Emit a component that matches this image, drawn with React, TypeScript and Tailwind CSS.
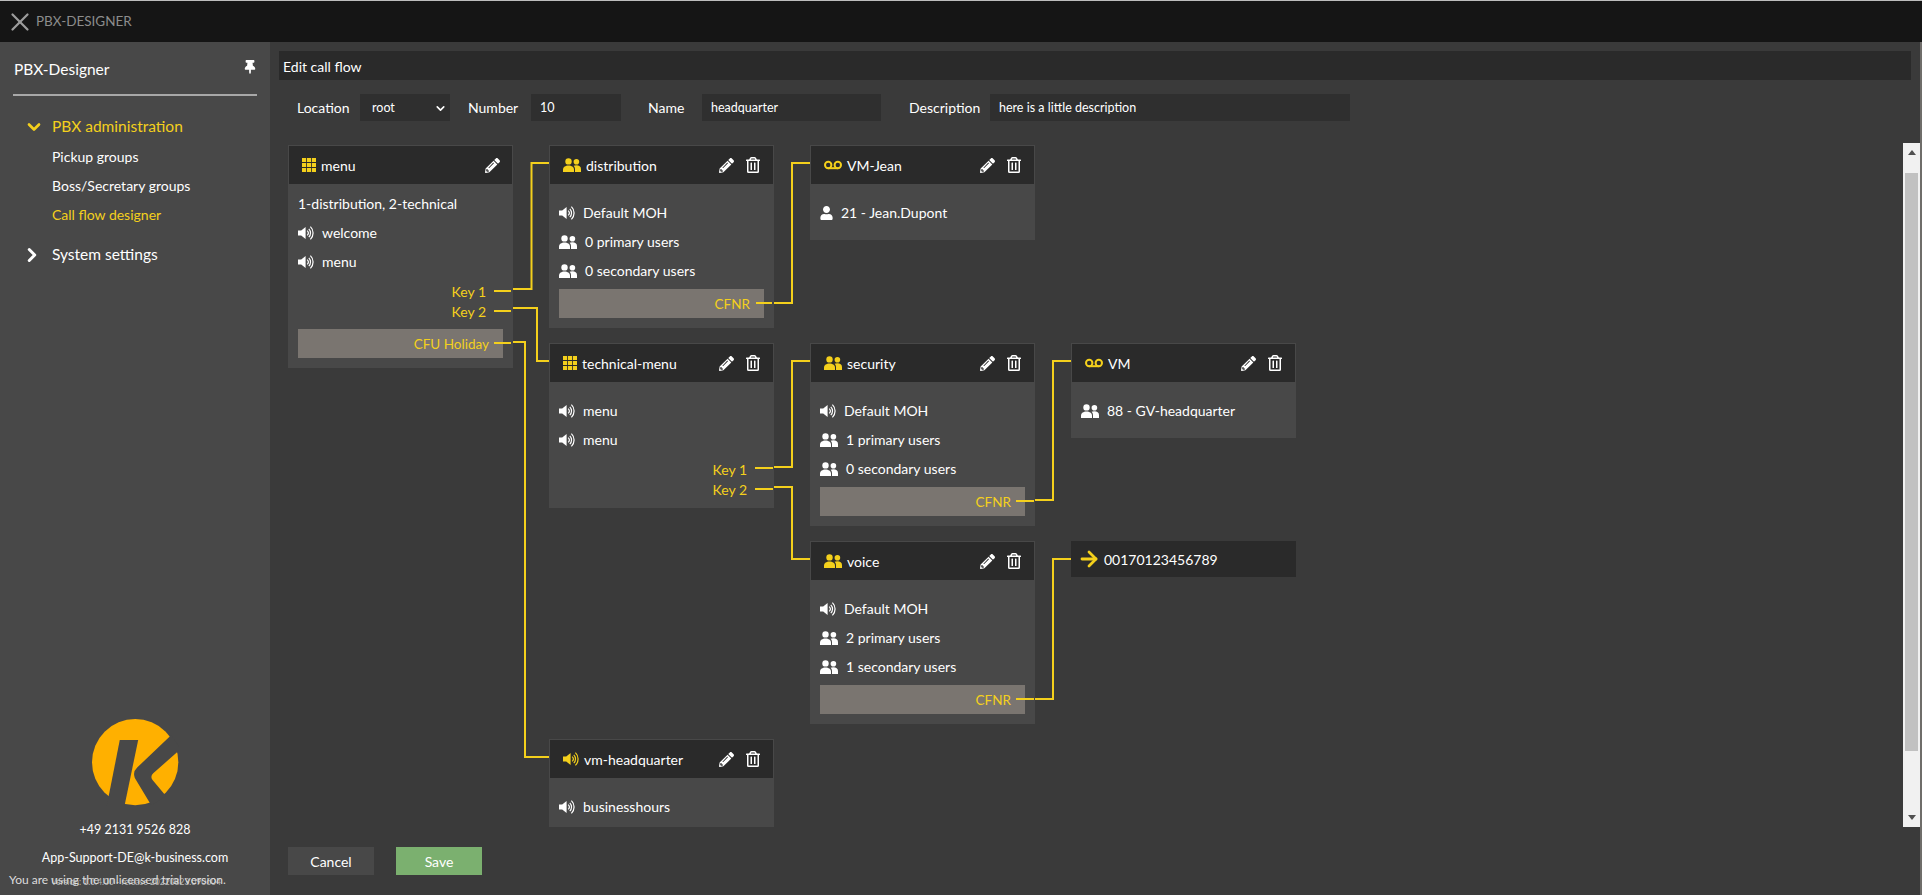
import { ArrowRight, ChevronDown, ChevronRight, X } from "lucide-react";
import { FaPencilAlt, FaRegTrashAlt, FaThumbtack, FaUser } from "react-icons/fa";
import { TfiLayoutGrid3Alt } from "react-icons/tfi";
import type { ReactNode } from "react";

const Speaker = ({ className = "text-white" }: { className?: string }) => (
  <svg viewBox="0 0 16 16" className={`w-4 h-4 shrink-0 ${className}`} fill="none" stroke="currentColor">
    <path d="M0 5.5h3.2L7.6 2v12L3.2 10.5H0z" fill="currentColor" stroke="none" />
    <path d="M9.2 5.6a3.4 3.4 0 0 1 0 4.8" strokeWidth="1.2" />
    <path d="M10.8 3.8a6 6 0 0 1 0 8.4" strokeWidth="1.2" />
    <path d="M12.4 1.6a9 9 0 0 1 0 12.8" strokeWidth="1.2" />
  </svg>
);

const Users = ({ className = "text-white" }: { className?: string }) => (
  <svg viewBox="0 0 18 14" className={`w-[18px] h-[14px] shrink-0 ${className}`} fill="currentColor">
    <circle cx="5.5" cy="3.4" r="3.2" />
    <path d="M0 14v-2.600C0 9 2.500 7.400 5.500 7.400S11 9 11 11.400V14z" />
    <circle cx="13.400" cy="3.800" r="2.800" />
    <path d="M12 14v-2.800c0-1.400-.5-2.600-1.400-3.400.7-.3 1.700-.5 2.800-.5 2.600 0 4.600 1.400 4.600 3.600V14z" />
  </svg>
);

const Voicemail = () => (
  <svg viewBox="0 0 18 10" className="w-[18px] h-[10px] shrink-0 text-[#f4d01c]" fill="none" stroke="currentColor" strokeWidth="2">
    <circle cx="4.200" cy="5" r="3.200" />
    <circle cx="13.800" cy="5" r="3.200" />
    <path d="M4.200 8.200h9.600" />
  </svg>
);

const Grid = () => <TfiLayoutGrid3Alt className="w-[14px] h-[14px] text-[#f4d01c]" />;

const Row = ({ icon, children }: { icon: ReactNode; children: ReactNode }) => (
  <div className="h-[29px] flex items-center gap-[8px]">
    {icon}
    <span>{children}</span>
  </div>
);

const Node = ({
  pos,
  icon,
  title,
  canDelete = true,
  children,
}: {
  pos: string;
  icon: ReactNode;
  title: string;
  canDelete?: boolean;
  children: ReactNode;
}) => (
  <div className={`absolute w-[225px] bg-[#484848] p-px pb-0 ${pos}`}>
    <div className="h-[38px] bg-[#2a2a2a] flex items-center pl-[13px] pr-[12px] gap-[5px]">
      {icon}
      <span className="flex-1 pt-px">{title}</span>
      <FaPencilAlt className="w-[15px] h-[15px] text-white" />
      {canDelete && <FaRegTrashAlt className="w-[16px] h-[16px] ml-[6px] text-white" />}
    </div>
    {children}
  </div>
);

const Exit = ({ label, pt = "" }: { label: string; pt?: string }) => (
  <div className={`h-5 flex justify-end items-center text-[#f4d01c] pr-[17px] ${pt}`}>{label}</div>
);

const Forward = ({ label }: { label: string }) => (
  <div className="h-[29px] bg-[#7a7570] text-[#f4d01c] text-[13.5px] flex items-center justify-end pr-[14px] pt-px">{label}</div>
);

export default function App() {
  return (
    <div className="w-[1922px] h-[895px] flex flex-col overflow-hidden bg-[#3a3a3a] text-white text-[14px] font-['Lato',sans-serif]">
      <header className="h-[42px] shrink-0 bg-[#151515] border-t border-[#bdbdbd] flex items-center pl-[5px] gap-[1px] text-[#8c8c8c] text-[13.5px]">
        <X className="w-[30px] h-[30px] text-[#9c9c9c]" strokeWidth={1.8} />
        <span>PBX-DESIGNER</span>
      </header>

      <div className="flex-1 flex min-h-0">
        <aside className="relative w-[270px] shrink-0 bg-[#484848] flex flex-col">
          <div className="mx-[13px] h-[54px] border-b-2 border-[#a8a8a8] flex items-center justify-between text-[15.5px] pt-[4px] pl-px">
            <span>PBX-Designer</span>
            <FaThumbtack className="w-[14px] h-[14px] mb-[6px]" />
          </div>
          <nav className="mt-[16px] pl-[24px]">
            <div className="h-[29px] flex items-center gap-[8px] text-[#f4d01c] text-[15.5px]">
              <ChevronDown className="w-[20px] h-[20px]" strokeWidth={3.2} />
              <span>PBX administration</span>
            </div>
            <ul className="pl-[28px] mt-[1px]">
              <li className="h-[29px] flex items-center">Pickup groups</li>
              <li className="h-[29px] flex items-center">Boss/Secretary groups</li>
              <li className="h-[29px] flex items-center text-[#f4d01c]">Call flow designer</li>
            </ul>
            <div className="mt-[11px] h-[29px] flex items-center gap-[9px] text-[15.5px]">
              <ChevronRight className="w-[22px] h-[22px] -ml-[3px]" strokeWidth={3.2} />
              <span>System settings</span>
            </div>
          </nav>

          <div className="mt-auto mb-[23px] flex flex-col items-center text-[12.5px]">
            <svg viewBox="275 60 260 260" className="w-[87px] h-[87px] mb-[10px]">
              <circle cx="404" cy="189" r="129" fill="#ffb000" />
              <path d="M358 123h55L372 320h-53z" fill="#484848" />
              <path d="M512 108l28 42-82 72q-10 10-2 20l40 48-44 28-49-82q-7-18 7-31z" fill="#484848" />
            </svg>
            <div className="h-[28px] flex items-center">+49 2131 9526 828</div>
            <div className="h-[28px] flex items-center">App-Support-DE@k-business.com</div>
          </div>
          <div className="absolute left-[51px] bottom-[6px] text-[8.5px] text-[#b5b5b5] whitespace-nowrap">Version: 1.0.4.00 - release 20220823.090604</div>
          <div className="absolute left-[9px] bottom-[6px] text-[12px] text-[#dcdcdc] whitespace-nowrap">You are using the unlicensed trial version.</div>
        </aside>

        <main className="flex-1 min-w-0 pl-[9px] pt-[9px]">
          <div className="h-[29px] w-[1632px] bg-[#2a2a2a] flex items-center pl-[4px] pt-px">Edit call flow</div>

          <div className="h-[27px] mt-[14px] flex items-center">
            <label className="ml-[18px] w-[63px]">Location</label>
            <div className="w-[90px] h-full bg-[#2f2f2f] flex items-center justify-between pl-[12px] pr-[3px] pt-px text-[12.5px]">
              <span>root</span>
              <ChevronDown className="w-[13px] h-[13px]" strokeWidth={3} />
            </div>
            <label className="ml-[18px] w-[63px]">Number</label>
            <div className="w-[90px] h-full bg-[#2f2f2f] flex items-center pl-[9px] pt-px text-[12.5px]">10</div>
            <label className="ml-[27px] w-[54px]">Name</label>
            <div className="w-[179px] h-full bg-[#2f2f2f] flex items-center pl-[9px] pt-px text-[12.5px]">headquarter</div>
            <label className="ml-[28px] w-[81px]">Description</label>
            <div className="w-[360px] h-full bg-[#2f2f2f] flex items-center pl-[9px] pt-px text-[12.5px]">here is a little description</div>
          </div>

          <div className="relative h-[684px] mt-[22px] w-[1641px]">
            <Node pos="left-[9px] top-[2px]" title="menu" canDelete={false} icon={<Grid />}>
              <div className="px-[9px] pt-[5px] pb-[10px]">
                <div className="h-[29px] flex items-center">1-distribution, 2-technical</div>
                <Row icon={<Speaker />}>welcome</Row>
                <Row icon={<Speaker />}>menu</Row>
                <Exit label="Key 1" pt="mt-[5px]" />
                <Exit label="Key 2" />
                <div className="mt-[8px]"><Forward label="CFU Holiday" /></div>
              </div>
            </Node>

            <Node pos="left-[270px] top-[2px]" title="distribution" icon={<Users className="text-[#f4d01c]" />}>
              <div className="px-[9px] pt-[14px] pb-[10px]">
                <Row icon={<Speaker />}>Default MOH</Row>
                <Row icon={<Users />}>0 primary users</Row>
                <Row icon={<Users />}>0 secondary users</Row>
                <div className="mt-[4px]"><Forward label="CFNR" /></div>
              </div>
            </Node>

            <Node pos="left-[531px] top-[2px]" title="VM-Jean" icon={<Voicemail />}>
              <div className="px-[9px] pt-[14px] pb-[13px]">
                <Row icon={<FaUser className="w-[13px] h-[14px] shrink-0" />}>21 - Jean.Dupont</Row>
              </div>
            </Node>

            <Node pos="left-[270px] top-[200px]" title="technical-menu" icon={<Grid />}>
              <div className="px-[9px] pt-[14px] pb-[9px]">
                <Row icon={<Speaker />}>menu</Row>
                <Row icon={<Speaker />}>menu</Row>
                <Exit label="Key 1" pt="mt-[5px]" />
                <Exit label="Key 2" />
              </div>
            </Node>

            <Node pos="left-[531px] top-[200px]" title="security" icon={<Users className="text-[#f4d01c]" />}>
              <div className="px-[9px] pt-[14px] pb-[10px]">
                <Row icon={<Speaker />}>Default MOH</Row>
                <Row icon={<Users />}>1 primary users</Row>
                <Row icon={<Users />}>0 secondary users</Row>
                <div className="mt-[4px]"><Forward label="CFNR" /></div>
              </div>
            </Node>

            <Node pos="left-[792px] top-[200px]" title="VM" icon={<Voicemail />}>
              <div className="px-[9px] pt-[14px] pb-[13px]">
                <Row icon={<Users />}>88 - GV-headquarter</Row>
              </div>
            </Node>

            <Node pos="left-[531px] top-[398px]" title="voice" icon={<Users className="text-[#f4d01c]" />}>
              <div className="px-[9px] pt-[14px] pb-[10px]">
                <Row icon={<Speaker />}>Default MOH</Row>
                <Row icon={<Users />}>2 primary users</Row>
                <Row icon={<Users />}>1 secondary users</Row>
                <div className="mt-[4px]"><Forward label="CFNR" /></div>
              </div>
            </Node>

            <div className="absolute left-[792px] top-[398px] w-[225px] h-[36px] bg-[#2a2a2a] flex items-center pl-[6px] gap-[3px]">
              <ArrowRight className="w-[24px] h-[24px] text-[#f4d01c]" strokeWidth={2.8} />
              <span>00170123456789</span>
            </div>

            <Node pos="left-[270px] top-[596px]" title="vm-headquarter" icon={<Speaker className="text-[#f4d01c]" />}>
              <div className="px-[9px] pt-[14px] pb-[6px]">
                <Row icon={<Speaker />}>businesshours</Row>
              </div>
            </Node>

            {/* connectors sit on top of the nodes, drawn in page coordinates */}
            <svg viewBox="279 143 1641 684" className="absolute inset-0 w-[1641px] h-[684px] pointer-events-none" fill="none" stroke="#f4d01c" strokeWidth="2">
              <path d="M494 291h17M513 289h18.500V163H549" />
              <path d="M494 311h17M513 308h24v53h12" />
              <path d="M494 343h17M513 342h12v415h24" />
              <path d="M756 303h16M774 303h18V163h18" />
              <path d="M755 468h18M774 467h18V361h18" />
              <path d="M755 489h18M774 487h18v72h18" />
              <path d="M1016 501h18M1035 500h18V361h18" />
              <path d="M1016 699h18M1035 699h18V559h18" />
            </svg>

            {/* scrollbar of the canvas */}
            <div className="absolute left-[1624px] top-0 w-[17px] h-full bg-[#f1f1f1] flex flex-col items-center">
              <div className="mt-[7px] w-0 h-0 border-x-[4px] border-x-transparent border-b-[5px] border-b-[#505050]" />
              <div className="mt-[18px] w-[13px] h-[578px] bg-[#c1c1c1]" />
              <div className="mt-auto mb-[7px] w-0 h-0 border-x-[4px] border-x-transparent border-t-[5px] border-t-[#505050]" />
            </div>
          </div>

          <div className="mt-[20px] pl-[9px] flex gap-[22px]">
            <button className="w-[86px] h-[28px] bg-[#484848]">Cancel</button>
            <button className="w-[86px] h-[28px] bg-[#7bb06f]">Save</button>
          </div>
        </main>

        <div className="w-[2px] shrink-0 bg-[#6f6d6a]" />
      </div>
    </div>
  );
}
